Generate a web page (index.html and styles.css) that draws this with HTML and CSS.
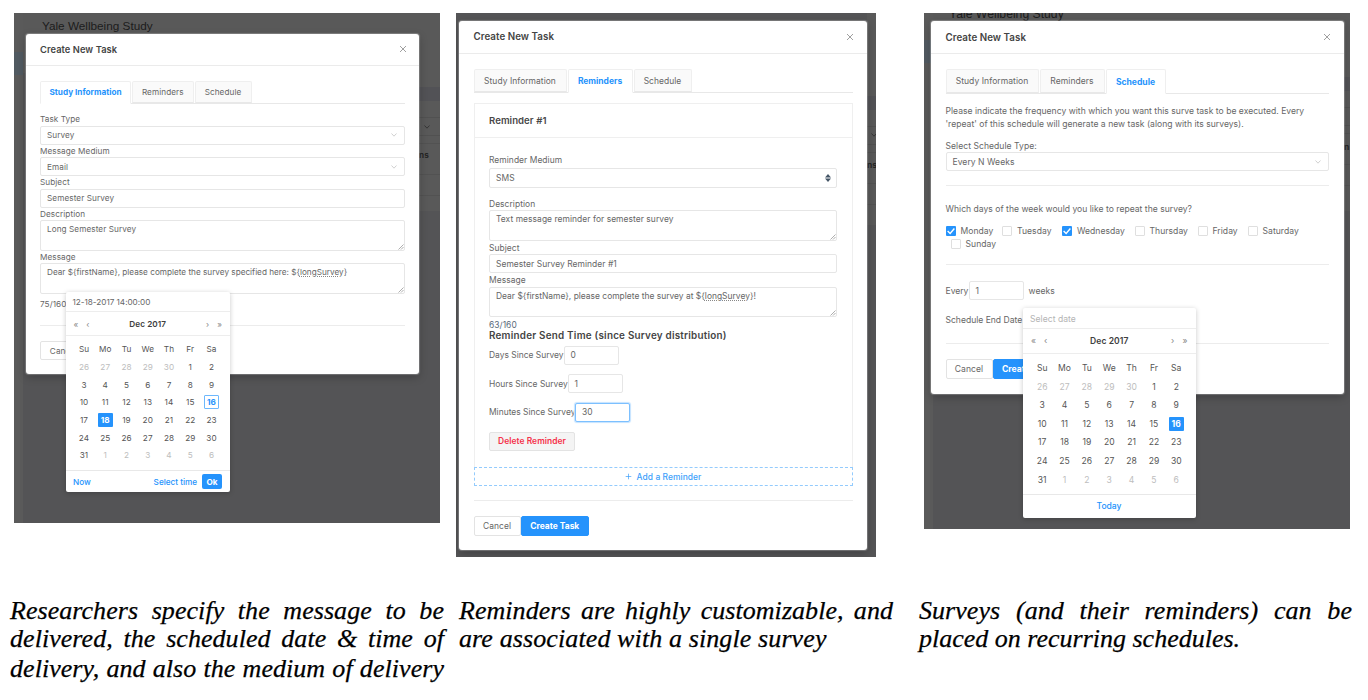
FILE: index.html
```html
<!DOCTYPE html>
<html lang="en">
<head>
<meta charset="utf-8">
<title>Create New Task</title>
<link rel="stylesheet" href="styles.css">
</head>
<body>
<main class="gallery">
  <section class="shot shot-info">
    <div class="rail"></div><div class="rail-active"></div>
    <div class="backdrop-title">Yale Wellbeing Study</div>
    <div class="backdrop-side">
      <div class="side-band"></div>
      <div class="side-select"><svg class="chev" viewBox="0 0 8 8"><path d="M1.5 2.5 4 5.2 6.5 2.5"/></svg></div>
      <div class="side-head">ns</div>
      <div class="side-foot"></div>
    </div>
    <div class="modal">
      <header class="modal-head"><span>Create New Task</span><svg class="close" viewBox="0 0 8 8"><path d="M1 1 7 7M7 1 1 7"/></svg></header>
      <nav class="tabs"><span class="tab active">Study Information</span><span class="tab">Reminders</span><span class="tab">Schedule</span></nav>
      <div class="form">
        <div class="label">Task Type</div>
        <div class="control">Survey<svg class="chev" viewBox="0 0 8 8"><path d="M1.5 2.5 4 5.2 6.5 2.5"/></svg></div>
        <div class="label">Message Medium</div>
        <div class="control">Email<svg class="chev" viewBox="0 0 8 8"><path d="M1.5 2.5 4 5.2 6.5 2.5"/></svg></div>
        <div class="label">Subject</div>
        <div class="control">Semester Survey</div>
        <div class="label">Description</div>
        <div class="control area">Long Semester Survey<svg class="grip" viewBox="0 0 6 6"><path d="M0.5 5.5 5.5 .5M3 5.5 5.5 3"/></svg></div>
        <div class="label">Message</div>
        <div class="control area tight"><span>Dear ${firstName}, please complete the survey specified here: ${<u>longSurvey</u>}</span><svg class="grip" viewBox="0 0 6 6"><path d="M0.5 5.5 5.5 .5M3 5.5 5.5 3"/></svg></div>
        <div class="counter">75/160</div>
      </div>
      <footer class="actions"><span class="btn">Cancel</span></footer>
    </div>
    <div class="picker">
      <div class="picker-input">12-18-2017 14:00:00</div>
      <div class="picker-head"><span class="nav"><i>«</i><i>‹</i></span><b>Dec 2017</b><span class="nav"><i>›</i><i>»</i></span></div>
      <div class="days">
        <span>Su</span><span>Mo</span><span>Tu</span><span>We</span><span>Th</span><span>Fr</span><span>Sa</span>
        <span class="out">26</span><span class="out">27</span><span class="out">28</span><span class="out">29</span><span class="out">30</span><span>1</span><span>2</span>
        <span>3</span><span>4</span><span>5</span><span>6</span><span>7</span><span>8</span><span>9</span>
        <span>10</span><span>11</span><span>12</span><span>13</span><span>14</span><span>15</span><span><em class="today">16</em></span>
        <span>17</span><span><em class="picked">18</em></span><span>19</span><span>20</span><span>21</span><span>22</span><span>23</span>
        <span>24</span><span>25</span><span>26</span><span>27</span><span>28</span><span>29</span><span>30</span>
        <span>31</span><span class="out">1</span><span class="out">2</span><span class="out">3</span><span class="out">4</span><span class="out">5</span><span class="out">6</span>
      </div>
      <div class="picker-foot"><span>Now</span><span class="push">Select time</span><span class="ok">Ok</span></div>
    </div>
  </section>

  <section class="shot shot-reminders">
    <div class="backdrop-side">
      <div class="side-band"></div>
      <div class="side-select"><svg class="chev" viewBox="0 0 8 8"><path d="M1.5 2.5 4 5.2 6.5 2.5"/></svg></div>
      <div class="side-head">ns</div>
      <div class="side-foot"></div>
    </div>
    <div class="modal">
      <header class="modal-head"><span>Create New Task</span><svg class="close" viewBox="0 0 8 8"><path d="M1 1 7 7M7 1 1 7"/></svg></header>
      <nav class="tabs"><span class="tab">Study Information</span><span class="tab active">Reminders</span><span class="tab">Schedule</span></nav>
      <div class="card">
        <div class="card-head">Reminder #1</div>
        <div class="card-body">
          <div class="label">Reminder Medium</div>
          <div class="control medium">SMS<svg class="updown" viewBox="0 0 6 8"><path d="M3 0 6 3.4H0ZM3 8 0 4.6H6Z"/></svg></div>
          <div class="label">Description</div>
          <div class="control area">Text message reminder for semester survey<svg class="grip" viewBox="0 0 6 6"><path d="M0.5 5.5 5.5 .5M3 5.5 5.5 3"/></svg></div>
          <div class="label">Subject</div>
          <div class="control">Semester Survey Reminder #1</div>
          <div class="label">Message</div>
          <div class="control area tight"><span>Dear ${firstName}, please complete the survey at ${<u>longSurvey</u>}!</span><svg class="grip" viewBox="0 0 6 6"><path d="M0.5 5.5 5.5 .5M3 5.5 5.5 3"/></svg></div>
          <div class="counter">63/160</div>
          <div class="send-time">Reminder Send Time (since Survey distribution)</div>
          <div class="row"><span class="w-days">Days Since Survey</span><span class="control num">0</span></div>
          <div class="row"><span class="w-hours">Hours Since Survey</span><span class="control num">1</span></div>
          <div class="row"><span class="w-minutes">Minutes Since Survey</span><span class="control num focus">30</span></div>
          <div class="btn danger">Delete Reminder</div>
        </div>
      </div>
      <div class="add"><svg viewBox="0 0 8 8"><path d="M4 .8V7.2M.8 4H7.2"/></svg>Add a Reminder</div>
      <footer class="actions"><span class="btn">Cancel</span><span class="btn primary">Create Task</span></footer>
    </div>
  </section>

  <section class="shot shot-schedule">
    <div class="rail"></div><div class="rail-active"></div>
    <div class="backdrop-title">Yale Wellbeing Study</div>
    <div class="backdrop-side">
      <div class="side-band"></div>
      <div class="side-select"></div>
      <div class="side-head">n</div>
      <div class="side-foot"></div>
    </div>
    <div class="modal">
      <header class="modal-head"><span>Create New Task</span><svg class="close" viewBox="0 0 8 8"><path d="M1 1 7 7M7 1 1 7"/></svg></header>
      <nav class="tabs"><span class="tab">Study Information</span><span class="tab">Reminders</span><span class="tab active">Schedule</span></nav>
      <div class="form">
        <p class="intro"><span>Please indicate the frequency with which you want this surve task to be executed. Every</span><br><span>'repeat' of this schedule will generate a new task (along with its surveys).</span></p>
        <div class="label">Select Schedule Type:</div>
        <div class="control">Every N Weeks<svg class="chev" viewBox="0 0 8 8"><path d="M1.5 2.5 4 5.2 6.5 2.5"/></svg></div>
        <div class="days-block">
          <div class="question">Which days of the week would you like to repeat the survey?</div>
          <div class="checks">
            <span class="check c1"><i class="box on"><svg viewBox="0 0 8 8"><path d="M1.3 4 3.3 6 6.7 2"/></svg></i>Monday</span>
            <span class="check c2"><i class="box"></i>Tuesday</span>
            <span class="check c3"><i class="box on"><svg viewBox="0 0 8 8"><path d="M1.3 4 3.3 6 6.7 2"/></svg></i>Wednesday</span>
            <span class="check c4"><i class="box"></i>Thursday</span>
            <span class="check c5"><i class="box"></i>Friday</span>
            <span class="check c6"><i class="box"></i>Saturday</span>
          </div>
          <div class="checks second"><span class="check"><i class="box"></i>Sunday</span></div>
        </div>
        <div class="row every"><span class="w-every">Every</span><span class="control num">1</span><span class="unit">weeks</span></div>
        <div class="row"><span>Schedule End Date</span></div>
      </div>
      <footer class="actions"><span class="btn">Cancel</span><span class="btn primary">Create Task</span></footer>
    </div>
    <div class="picker">
      <div class="picker-input hint">Select date</div>
      <div class="picker-head"><span class="nav"><i>«</i><i>‹</i></span><b>Dec 2017</b><span class="nav"><i>›</i><i>»</i></span></div>
      <div class="days">
        <span>Su</span><span>Mo</span><span>Tu</span><span>We</span><span>Th</span><span>Fr</span><span>Sa</span>
        <span class="out">26</span><span class="out">27</span><span class="out">28</span><span class="out">29</span><span class="out">30</span><span>1</span><span>2</span>
        <span>3</span><span>4</span><span>5</span><span>6</span><span>7</span><span>8</span><span>9</span>
        <span>10</span><span>11</span><span>12</span><span>13</span><span>14</span><span>15</span><span><em class="picked">16</em></span>
        <span>17</span><span>18</span><span>19</span><span>20</span><span>21</span><span>22</span><span>23</span>
        <span>24</span><span>25</span><span>26</span><span>27</span><span>28</span><span>29</span><span>30</span>
        <span>31</span><span class="out">1</span><span class="out">2</span><span class="out">3</span><span class="out">4</span><span class="out">5</span><span class="out">6</span>
      </div>
      <div class="picker-foot center"><span>Today</span></div>
    </div>
  </section>
</main>
<div class="captions">
  <p class="caption"><span class="full">Researchers specify the message to be</span><span class="full">delivered, the scheduled date &amp; time of</span><span class="last full">delivery, and also the medium of delivery</span></p>
  <p class="caption"><span class="full">Reminders are highly customizable, and</span><span>are associated with a single survey</span></p>
  <p class="caption"><span class="full">Surveys (and their reminders) can be</span><span>placed on recurring schedules.</span></p>
</div>
</body>
</html>
```
FILE: styles.css
```css
* { box-sizing: border-box; }
body { margin: 0; width: 1368px; height: 700px; overflow: hidden; background: #fff; }
i, em { font-style: normal; }
svg { fill: none; stroke: #999; stroke-width: .8; }

.gallery { display: flex; align-items: flex-start; padding: 13px 0 0 14px; height: 584px; }
.shot {
  position: relative; flex: none; overflow: hidden; background: #545456; color: #666;
  font-family: Inter, "Liberation Sans", sans-serif; font-size: 8.2px; letter-spacing: .07px; white-space: nowrap;
}
.shot-info { width: 426px; height: 510px; margin-right: 16px; }
.shot-reminders { width: 420px; height: 544px; margin-right: 48px; font-size: 8.45px; letter-spacing: .05px; }
.shot-schedule { width: 426px; height: 516px; font-size: 8.56px; letter-spacing: .05px; }

/* dimmed page behind the dialogs */
.rail { position: absolute; left: 0; top: 0; width: 9px; height: 100%; background: #5a5a5a; }
.rail-active { position: absolute; left: 0; top: 39px; width: 9px; height: 23px; background: #515a61; }
.backdrop-title { position: absolute; left: 9px; right: 0; top: 0; height: 74px; padding-left: 19px; background: #595959; color: #1c1c1c; font: 500 11.75px/26px "Liberation Sans", sans-serif; letter-spacing: 0; }
.shot-schedule .rail-active { top: 27px; }
.shot-schedule .backdrop-title { padding-left: 16px; height: 64px; font-size: 12.2px; line-height: 3px; }
.backdrop-side { position: absolute; right: 0; top: 0; width: 21px; height: 198px; padding-top: 74px; background: #595959; }
.shot-info .backdrop-title { z-index: 1; height: 60px; }
.side-band { height: 14px; background: #525256; }
.side-select { height: 19px; margin-top: 16px; border: solid #515151; border-width: 1px 0; }
.side-select .chev { margin: 5px 0 0 4px; stroke: #2c2c2c; display: block; }
.side-head { height: 32px; margin-top: 7px; border: solid #525252; border-width: 1px 0; padding: 6px 0 0 0; font-weight: 700; color: #252525; }
.side-foot { height: 1px; margin-top: 20px; background: #525252; }
.shot-reminders .backdrop-side { width: 9px; height: 212px; padding-top: 83px; }
.shot-reminders .side-select { margin-top: 16px; }
.shot-reminders .side-select .chev { margin-left: 3px; margin-top: 4px; }
.shot-reminders .side-head { padding: 7px 0 0 0; margin-top: 7px; }
.shot-schedule .backdrop-side { width: 6px; height: 198px; padding-top: 64px; }
.shot-schedule .side-head { padding-top: 8px; }

/* dialog */
.modal { position: absolute; z-index: 2; background: #fff; border-radius: 3px; box-shadow: 0 0 1px 1px rgba(255,255,255,.25), 0 3px 8px rgba(0,0,0,.25); padding: 0 14px; }
.shot-info .modal { left: 12px; top: 21px; width: 393px; height: 340px; }
.shot-reminders .modal { left: 3px; top: 7.5px; width: 408px; height: 529.5px; padding: 0 14.5px; }
.shot-schedule .modal { left: 7px; top: 8px; width: 412.5px; height: 373px; padding: 0 14.5px; }
.modal-head { display: flex; align-items: center; justify-content: space-between; height: 31.5px; margin: 0 -14px; padding: 0 12.5px 0 14px; border-bottom: 1px solid #ebebeb; font-size: 9.3px; font-weight: 600; color: #444; }
.shot-reminders .modal-head, .shot-schedule .modal-head { height: 33.3px; margin: 0 -14.5px; font-size: 9.75px; padding: 0 13px 0 14.5px; }
.close { width: 8px; height: 8px; stroke: #888; }
.tabs { display: flex; gap: 1px; height: 23.5px; margin-top: 15px; border-bottom: 1px solid #e8e8e8; }
.shot-reminders .tabs, .shot-schedule .tabs { height: 24.5px; }
.tab { display: flex; align-items: center; justify-content: center; height: 100%; border: 1px solid #efefef; border-bottom-color: #e8e8e8; border-radius: 2px 2px 0 0; background: #fafafa; }
.tab.active { height: calc(100% + 1px); background: #fff; border-bottom-color: #fff; color: #2593fc; font-weight: 700; letter-spacing: 0; }
.tab:nth-child(1) { width: 91px; }
.tab:nth-child(2) { width: 61.5px; }
.tab:nth-child(3) { width: 57px; }
.shot-reminders .tab:nth-child(1), .shot-schedule .tab:nth-child(1) { width: 93px; }
.shot-reminders .tab:nth-child(2), .shot-schedule .tab:nth-child(2) { width: 65px; }
.shot-reminders .tab:nth-child(3) { width: 58px; }
.shot-schedule .tab:nth-child(3) { width: 60px; }

.form { padding-top: 9.4px; }
.label { height: 12.4px; line-height: 13.2px; }
.control { display: flex; align-items: center; justify-content: space-between; height: 19px; padding: 0 6px; border: 1px solid #e6e6e6; border-radius: 2px; background: #fff; }
.area { position: relative; height: 30.6px; align-items: flex-start; line-height: 11px; padding-top: 3px; }
.tight { letter-spacing: 0; }
.control u { text-decoration: underline dotted #888 1px; text-underline-offset: 1px; }
.chev { width: 8px; height: 8px; stroke: #c4c4c4; }
.grip { position: absolute; right: 0; bottom: 0; width: 6px; height: 6px; stroke: #777; stroke-width: .6; }
.counter { height: 19px; line-height: 20px; }
.actions { display: flex; margin-top: 12.6px; padding-top: 14.8px; border-top: 1px solid #ececec; }
.btn { display: flex; align-items: center; justify-content: center; width: 47px; height: 19.4px; border: 1px solid #e3e3e3; border-radius: 2px; background: #fff; }
.primary { width: 68.5px; background: #2593fc; border-color: #2593fc; color: #fff; font-weight: 700; letter-spacing: 0; }

/* reminder card */
.card { margin-top: 9.7px; height: 364px; border: 1px solid #efefef; border-bottom: 0; }
.card-head { height: 34.5px; line-height: 34px; padding-left: 14.5px; border-bottom: 1px solid #efefef; font-size: 9.6px; font-weight: 600; color: #484848; }
.card-body { padding: 14.2px 14.5px 0; }
.card .label { height: 13.4px; line-height: 14.6px; }
.card .label:first-child { height: 15.5px; }
.card .medium { height: 19.5px; margin-bottom: 9px; padding-right: 5px; }
.card .area { height: 30.8px; }
.updown { width: 6px; height: 8px; fill: #456; stroke: none; }
.card .counter { height: 12.6px; line-height: 16px; color: #5a6a7a; }
.send-time { height: 15.7px; line-height: 11px; font-size: 9.9px; font-weight: 600; color: #444; letter-spacing: .22px; }
.row { display: flex; align-items: center; height: 19px; margin-bottom: 9.6px; }
.row > span:first-child { letter-spacing: 0; }
.num { width: 55px; flex: none; }
.w-days { width: 74.5px; }
.w-hours { width: 78.5px; }
.w-minutes { width: 86px; }
.focus { border-color: #7cc0ff; box-shadow: 0 0 1px 1px #c5e3ff; }
.danger { width: 86px; background: #f4f4f4; color: #f5314a; font-weight: 600; }
.add { display: flex; align-items: center; justify-content: center; gap: 5px; height: 19.4px; border: 1px dashed #93cbfd; color: #3d9ffb; font-weight: 500; }
.add svg { width: 7px; height: 7px; stroke: #3d9ffb; }
.shot-reminders .actions { margin-top: 14px; padding-top: 15px; }

/* schedule */
.intro { margin: 0 0 9.4px; line-height: 13px; letter-spacing: .03px; }
.shot-schedule .form { padding-top: 10.8px; }
.days-block { margin-top: 13.8px; height: 80px; padding-top: 15.5px; border: solid #ececec; border-width: 1px 0; }
.question { height: 15px; line-height: 15px; margin-bottom: 7.5px; letter-spacing: .03px; }
.checks { display: flex; height: 13px; align-items: center; }
.check { display: flex; align-items: center; gap: 5px; flex: none; }
.box { width: 10px; height: 10px; border: 1px solid #dfdfdf; border-radius: 1px; }
.box.on { display: flex; border: 0; background: #2593fc; }
.box svg { width: 10px; height: 10px; stroke: #fff; stroke-width: 1.1; }
.c1 { width: 56.5px; } .c2 { width: 60px; } .c3 { width: 72.5px; } .c4 { width: 63px; } .c5 { width: 50px; }
.second { padding-left: 5px; }
.every { margin-top: 16px; margin-bottom: 10.4px; }
.w-every { width: 23px; }
.unit { padding-left: 5px; }
.shot-schedule .actions { margin-top: 13.8px; padding-top: 15px; }
.shot-schedule .form .row:last-child { margin-bottom: 0; }

/* calendar popup */
.picker { position: absolute; z-index: 3; background: #fff; border-radius: 2px; box-shadow: 0 1px 5px rgba(0,0,0,.22); }
.shot-info .picker { left: 51.5px; top: 279px; width: 164.5px; height: 200px; }
.shot-schedule .picker { left: 99px; top: 295px; width: 172.5px; height: 210px; }
.picker-input { height: 20px; line-height: 21px; padding-left: 7px; border-bottom: 1px solid #ededed; letter-spacing: -.03px; }
.hint { color: #b4b4b4; letter-spacing: .05px; }
.picker-head { display: flex; justify-content: space-between; align-items: center; height: 24.3px; padding: 0 8px; border-bottom: 1px solid #ededed; color: #404040; }
.picker-head b { font-weight: 600; }
.nav { display: flex; gap: 8px; color: #888; }
.days { display: grid; grid-template-columns: repeat(7, 21.25px); grid-auto-rows: 17.7px; justify-content: center; padding-top: 4px; height: 133.5px; color: #555; }
.days span { display: flex; align-items: center; justify-content: center; }
.days .out { color: #bdbdbd; }
.days em { display: flex; align-items: center; justify-content: center; width: 14.5px; height: 14.5px; border-radius: 1px; font-weight: 700; }
.today { border: 1px solid #6db8fd; color: #2593fc; }
.picked { background: #2593fc; color: #fff; }
.picker-foot { display: flex; align-items: center; height: 22.5px; padding: 0 8px 0 7.5px; border-top: 1px solid #e8e8e8; color: #2593fc; font-weight: 500; letter-spacing: -.02px; }
.push { margin-left: auto; }
.ok { margin-left: 5px; width: 20px; height: 14.5px; display: flex; align-items: center; justify-content: center; border-radius: 2px; background: #2593fc; color: #fff; font-weight: 700; }
.center { justify-content: center; }
.shot-schedule .picker-input { height: 21.3px; line-height: 23px; }
.shot-schedule .picker-head { height: 25px; }
.shot-schedule .days { grid-template-columns: repeat(7, 22.35px); grid-auto-rows: 18.6px; padding-top: 4.5px; height: 139.5px; }

.captions { display: flex; padding: 13px 0 0 10px; gap: 15px; }
.caption { width: 434px; margin: 0; font: italic 26px/28px Georgia, "Liberation Serif", serif; letter-spacing: .05px; color: #000; -webkit-text-stroke: .25px #000; }
.caption:nth-child(2) span:last-child { letter-spacing: .11px; }
.caption:nth-child(3) { margin-left: 11px; width: 433px; }
.caption:nth-child(3) span:last-child { letter-spacing: 0; }
.caption span { display: block; white-space: nowrap; }
.caption .full { text-align: justify; text-align-last: justify; }
.caption .last { line-height: 31px; }
```
